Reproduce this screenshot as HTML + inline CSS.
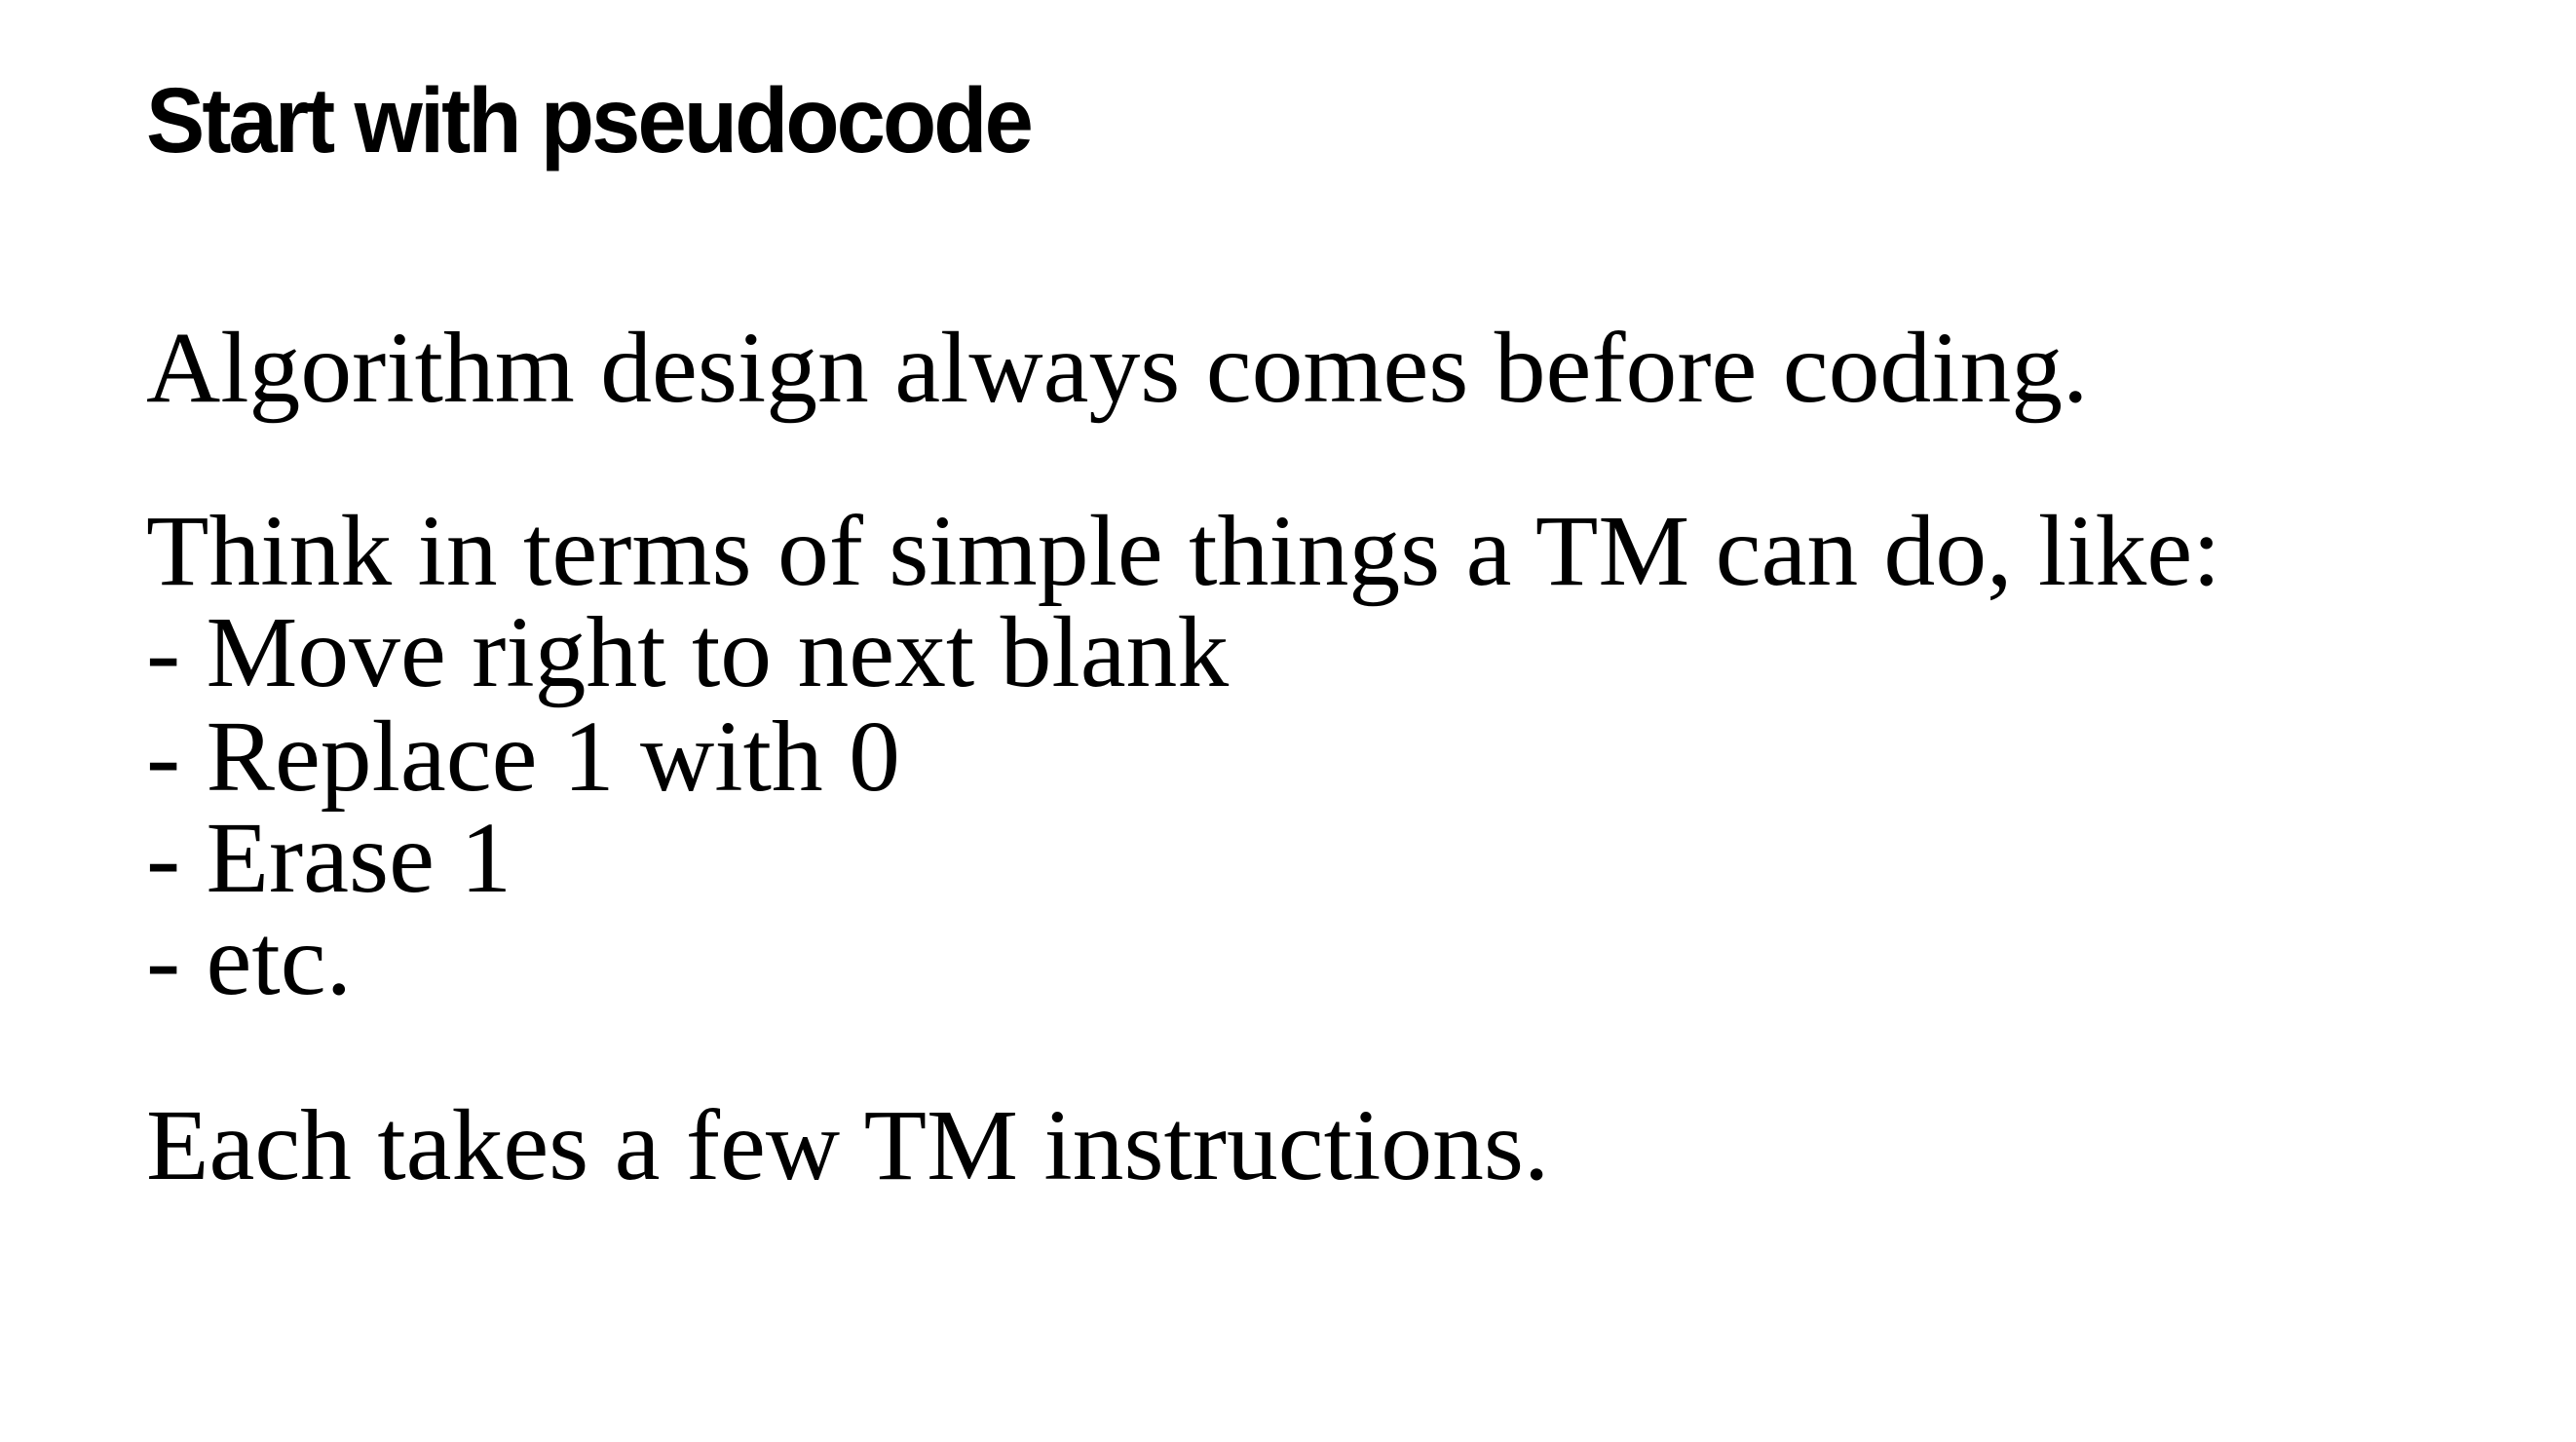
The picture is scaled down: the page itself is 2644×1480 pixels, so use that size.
<!DOCTYPE html>
<html><head><meta charset="utf-8"><style>
html,body{margin:0;padding:0;background:#fff;}
body{width:2644px;height:1480px;position:relative;overflow:hidden;}
.t{position:absolute;left:150px;line-height:1;white-space:nowrap;color:#000;}
.h{font-family:"Liberation Sans",sans-serif;font-weight:bold;font-size:95px;letter-spacing:-3px;transform-origin:0 0;transform:scaleX(0.95);}
.s{font-family:"Liberation Serif",serif;font-size:104px;transform-origin:0 0;transform:scaleX(1.015);}
</style></head><body>
<div class="t h" style="top:77px">Start with pseudocode</div>
<div class="t s" style="top:326px">Algorithm design always comes before coding.</div>
<div class="t s" style="top:514px">Think in terms of simple things a TM can do, like:</div>
<div class="t s" style="top:618px">- Move right to next blank</div>
<div class="t s" style="top:725px">- Replace 1 with 0</div>
<div class="t s" style="top:829px">- Erase 1</div>
<div class="t s" style="top:934px">- etc.</div>
<div class="t s" style="top:1124px">Each takes a few TM instructions.</div>
</body></html>
